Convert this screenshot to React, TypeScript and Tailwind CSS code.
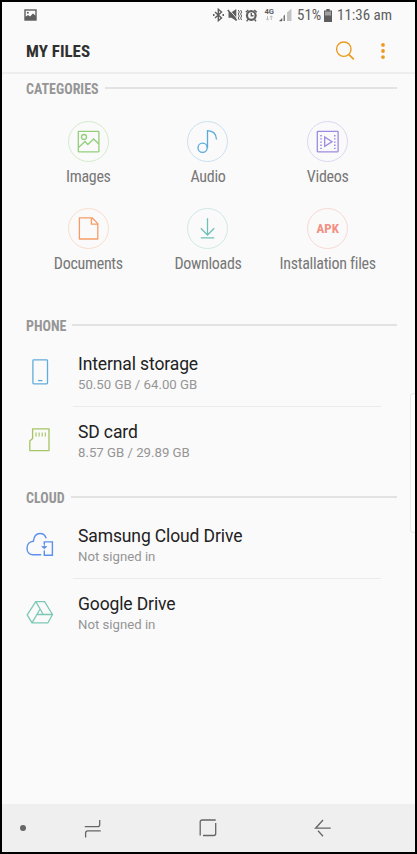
import React from 'react';

const ImagesIcon = () => (
  <svg className="w-[41px] h-[41px]" viewBox="0 0 41 41" fill="none" stroke="#93cf7b" strokeWidth="1.3">
    <circle cx="20.5" cy="20.5" r="20" stroke="#d3ebca" strokeWidth="1" />
    <rect x="10.3" y="10.4" width="20.6" height="20.4" rx="0.5" />
    <circle cx="16" cy="16" r="2.5" />
    <path d="M10.5 26.5L17 20.5L19.8 23.5L25.7 18L30.8 23" />
  </svg>
);

const AudioIcon = () => (
  <svg className="w-[41px] h-[41px]" viewBox="0 0 41 41" fill="none" stroke="#5ba9dc" strokeWidth="1.3">
    <circle cx="20.5" cy="20.5" r="20" stroke="#c9e0f0" strokeWidth="1" />
    <circle cx="15.6" cy="26.8" r="4.6" />
    <path d="M20.5 27V9.6C26 9.8 29.3 13 29.5 18.5" />
  </svg>
);

const VideosIcon = () => (
  <svg className="w-[41px] h-[41px]" viewBox="0 0 41 41" fill="none" stroke="#9d8ae0" strokeWidth="1.3">
    <circle cx="20.5" cy="20.5" r="20" stroke="#dcd6f3" strokeWidth="1" />
    <rect x="10.3" y="10.4" width="20.8" height="20.4" rx="0.5" />
    <path d="M17.7 16V25.4L25 20.7Z" />
    <path d="M14 14V28M27.8 14V28" strokeDasharray="1.4 1.8" strokeWidth="1.6" />
  </svg>
);

const DocumentsIcon = () => (
  <svg className="w-[41px] h-[41px]" viewBox="0 0 41 41" fill="none" stroke="#f79c66" strokeWidth="1.3">
    <circle cx="20.5" cy="20.5" r="20" stroke="#fadccb" strokeWidth="1" />
    <path d="M11.4 9.8H24L29.8 15.6V31H11.4ZM23.4 9.8V16.2H29.8" strokeLinejoin="round" />
  </svg>
);

const DownloadsIcon = () => (
  <svg className="w-[41px] h-[41px]" viewBox="0 0 41 41" fill="none" stroke="#6fc0b8" strokeWidth="1.3">
    <circle cx="20.5" cy="20.5" r="20" stroke="#cfe8e5" strokeWidth="1" />
    <path d="M20.5 10.3V26.8M13.8 20.3L20.5 27L27.2 20.3M13.8 29.9H27.2" />
  </svg>
);

const ApkIcon = () => (
  <div className="w-[41px] h-[41px] rounded-full border border-[#f9d8d3] flex items-center justify-center text-[#f28e82] text-[13px] font-bold font-stretch-condensed">
    APK
  </div>
);

const PhoneIcon = () => (
  <svg className="w-7 h-7" viewBox="0 0 28 28" fill="none" stroke="#62acdc" strokeWidth="1.3">
    <rect x="6.9" y="1.9" width="14.6" height="24" rx="0.8" />
    <path d="M12 22.6H16.4" />
  </svg>
);

const SdCardIcon = () => (
  <svg className="w-7 h-7" viewBox="0 0 28 28" fill="none" stroke="#a5c463" strokeWidth="1.3">
    <path d="M6.6 2.8H23V24.6H3.8V15L6.6 12.4Z" strokeLinejoin="round" />
    <path d="M10 6.4V10.6M13.1 6.4V10.6M16.2 6.4V10.6M19.3 6.4V10.6" strokeWidth="1.1" />
  </svg>
);

const CloudIcon = () => (
  <svg className="w-7 h-7" viewBox="0 0 28 28" fill="none" stroke="#5c90ec" strokeWidth="1.4">
    <path d="M15.2 24.8H7C3.3 24.8 1 22 1 18.3C1 14.2 3.7 11.4 7.4 11.2C8 6.2 10.5 3.5 14 3.5C17.3 3.5 19.3 5.4 20.2 8.3" />
    <path d="M18.3 14.5V11.9H26.4V25.2H18.3V20.5" />
    <path d="M18.4 13V17.7M15.8 16.5L18.4 18.8L20.8 16.5Z" fill="#5c90ec" strokeWidth="0.8" />
  </svg>
);

const DriveIcon = () => (
  <svg className="w-7 h-7" viewBox="0 0 28 28" fill="none" stroke="#7dc8b5" strokeWidth="1.3" strokeLinejoin="round">
    <path d="M9.8 3.6H18.6L26.5 16.5L22 24.8H6L1.2 16.8Z" />
    <path d="M9.8 3.6L17.3 16.5H26.5M14.1 11L6 24.8M17.3 16.5H11" />
  </svg>
);

const categories = [
  { label: 'Images', icon: <ImagesIcon /> },
  { label: 'Audio', icon: <AudioIcon /> },
  { label: 'Videos', icon: <VideosIcon /> },
  { label: 'Documents', icon: <DocumentsIcon /> },
  { label: 'Downloads', icon: <DownloadsIcon /> },
  { label: 'Installation files', icon: <ApkIcon /> },
];

const phoneItems = [
  { title: 'Internal storage', detail: '50.50 GB / 64.00 GB', icon: <PhoneIcon /> },
  { title: 'SD card', detail: '8.57 GB / 29.89 GB', icon: <SdCardIcon /> },
];

const cloudItems = [
  { title: 'Samsung Cloud Drive', detail: 'Not signed in', icon: <CloudIcon /> },
  { title: 'Google Drive', detail: 'Not signed in', icon: <DriveIcon /> },
];

type Item = { title: string; detail: string; icon: React.ReactNode };

function SectionHeader({ title }: { title: string }) {
  return (
    <div className="flex items-center h-5 pl-6 pr-[18px] gap-[6px]">
      <h2 className="pt-px text-[14px] leading-5 font-bold font-stretch-condensed text-[#969696]">{title}</h2>
      <div className="flex-1 h-[2px] bg-[#e2e2e2]" />
    </div>
  );
}

function ItemList({ items }: { items: Item[] }) {
  return (
    <ul>
      {items.map((item, index) => (
        <li key={item.title} className="flex h-[68px] pl-6">
          <div className="w-[47px] pt-[19px]">{item.icon}</div>
          <div className={`w-[308px] pl-[5px] pt-[14px] ${index === 0 ? 'border-b border-[#ebebeb]' : ''}`}>
            <div className="text-[17.5px] leading-[22px] tracking-[-0.12px] text-[#222222]">{item.title}</div>
            <div className="text-[13.2px] leading-5 text-[#959595]">{item.detail}</div>
          </div>
        </li>
      ))}
    </ul>
  );
}

function StatusBar() {
  return (
    <div className="flex items-center h-[26px] pl-[22px] pr-[23px] text-[#5e5e5e]">
      <svg className="w-[13px] h-3" viewBox="0 0 13 12">
        <rect x="1" y="1" width="11" height="10" fill="none" stroke="currentColor" strokeWidth="1.4" />
        <path d="M1 8L4 6L6 7.5L9 4.5L12 7V11H1Z" fill="currentColor" />
        <circle cx="3.8" cy="3.8" r="1" fill="currentColor" />
      </svg>
      <svg className="ml-auto mr-[4px] w-[81px] h-[14px]" viewBox="0 0 81 14" fill="none" stroke="currentColor" strokeWidth="1.4">
        {/* bluetooth */}
        <path d="M3 4L9.5 10L6.3 12.7V1.3L9.5 4L3 10" />
        <path d="M1 7H2.5M10.5 7H12" strokeWidth="1.8" />
        {/* muted with vibration */}
        <path d="M16.5 4.3H19.5L24.3 1V12.8L19.5 9.7H16.5Z" fill="currentColor" stroke="none" />
        <path d="M17 1.4L25.2 10.8" stroke="#fafafa" strokeWidth="0.9" />
        <path d="M15.8 2L24.6 12.4" strokeWidth="1.5" />
        <path d="M26.3 2L27.3 4L26.3 6L27.3 8L26.3 10L27.3 12M28.6 2L29.6 4L28.6 6L29.6 8L28.6 10L29.6 12" strokeWidth="1" />
        {/* alarm */}
        <circle cx="39.3" cy="7.5" r="5.4" fill="currentColor" stroke="none" />
        <circle cx="39.3" cy="7.5" r="3.2" fill="#fafafa" stroke="none" />
        <path d="M39.3 5V7.8H41.5M33.8 4.3L36.3 2M44.8 4.3L42.3 2M36 11.5L34.6 13.2M42.6 11.5L44 13.2" />
        {/* data arrows and signal */}
        <text x="52.5" y="6.4" fill="currentColor" stroke="none" fontSize="7.6" fontWeight="700">4G</text>
        <path d="M55.5 8V12M54.2 10.7L55.5 12.2L56.8 10.7M59.3 12V8M58 9.3L59.3 7.8L60.6 9.3" stroke="#b5b5b5" strokeWidth="0.9" />
        <path d="M67.5 13L70 10.5V13Z" fill="currentColor" stroke="currentColor" strokeWidth="0.5" />
        <path d="M71.5 8L73 6.5V13H71.5Z" fill="#777777" stroke="none" />
        <path d="M75 4.5L79.5 0.5V13H75Z" fill="#c3c3c3" stroke="none" />
      </svg>
      <span className="w-[27px] text-[15px] leading-5 font-stretch-condensed whitespace-nowrap">51%</span>
      <svg className="w-2 h-[13px]" viewBox="0 0 8 13">
        <path d="M2.3 0H5.7V1.5H8V13H0V1.5H2.3Z" fill="currentColor" />
        <rect x="1" y="2.5" width="6" height="4" fill="#a0a0a0" />
      </svg>
      <span className="ml-[5px] w-[55px] text-[15px] leading-5 font-stretch-condensed whitespace-nowrap">11:36 am</span>
    </div>
  );
}

function App() {
  return (
    <div className="relative flex flex-col w-[417px] h-[854px] border-2 border-black bg-[#fafafa] font-['Roboto',sans-serif] overflow-hidden">
      <StatusBar />

      <header className="flex items-center h-[46px] pl-6 pr-[29px] border-b-2 border-[#eeeeee]">
        <h1 className="pt-[3px] text-[17px] font-bold font-stretch-condensed text-[#303030]">MY FILES</h1>
        <svg className="ml-auto mt-px w-5 h-5" viewBox="0 0 20 20" fill="none" stroke="#eb9b20" strokeWidth="1.4">
          <circle cx="8.8" cy="8.2" r="7.2" />
          <path d="M14 13.6L18.8 18.4" strokeWidth="1.7" />
        </svg>
        <svg className="ml-[25px] mt-px w-[6px] h-4" viewBox="0 0 6 16" fill="#eb9b20">
          <circle cx="3" cy="1.9" r="1.9" />
          <circle cx="3" cy="8" r="1.9" />
          <circle cx="3" cy="14.1" r="1.9" />
        </svg>
      </header>

      <main className="flex-1 pt-1">
        <SectionHeader title="CATEGORIES" />
        <div className="grid grid-cols-3 w-[359px] ml-[26.5px] mt-[23px]">
          {categories.map((category) => (
            <div key={category.label} className="flex flex-col items-center h-[87px]">
              {category.icon}
              <span className="mt-[5px] text-[16px] leading-5 tracking-[-0.3px] font-stretch-condensed text-[#777777] whitespace-nowrap">
                {category.label}
              </span>
            </div>
          ))}
        </div>
        <div className="mt-5">
          <SectionHeader title="PHONE" />
          <div className="mt-1"><ItemList items={phoneItems} /></div>
        </div>
        <div className="mt-3">
          <SectionHeader title="CLOUD" />
          <div className="mt-1"><ItemList items={cloudItems} /></div>
        </div>
      </main>

      {/* edge panel handle */}
      <div className="absolute right-0 top-[391px] w-[5px] h-[140px] rounded-l-[4px] border border-r-0 border-[#e8e8e8] bg-[#fcfcfc]" />

      <nav className="flex items-center h-12 pl-[18px] bg-[#efefef]">
        <div className="w-[6px] h-[6px] rounded-full bg-[#666666]" />
        <svg className="ml-[58px] w-[18px] h-[19px]" viewBox="0 0 18 19" fill="none" stroke="#666666" strokeWidth="1.3">
          <path d="M0.8 7.6H13.5Q15.7 7.6 15.7 5.4V1M16.7 11.8H3.8Q1.6 11.8 1.6 14V18.4" />
        </svg>
        <svg className="ml-[97px] w-[18px] h-[18px]" viewBox="0 0 18 18" fill="none" stroke="#666666" strokeWidth="1.3">
          <path d="M1.2 16.5V3Q1.2 1 3.2 1H16.7M16.7 4V14.5Q16.7 16.5 14.7 16.5H4" />
        </svg>
        <svg className="ml-[97px] w-[18px] h-[18px]" viewBox="0 0 18 18" fill="none" stroke="#666666" strokeWidth="1.3">
          <path d="M16.7 9.2H1.6L9 1M4 11.8L9 17.2" />
        </svg>
      </nav>
    </div>
  );
}

export default App;
